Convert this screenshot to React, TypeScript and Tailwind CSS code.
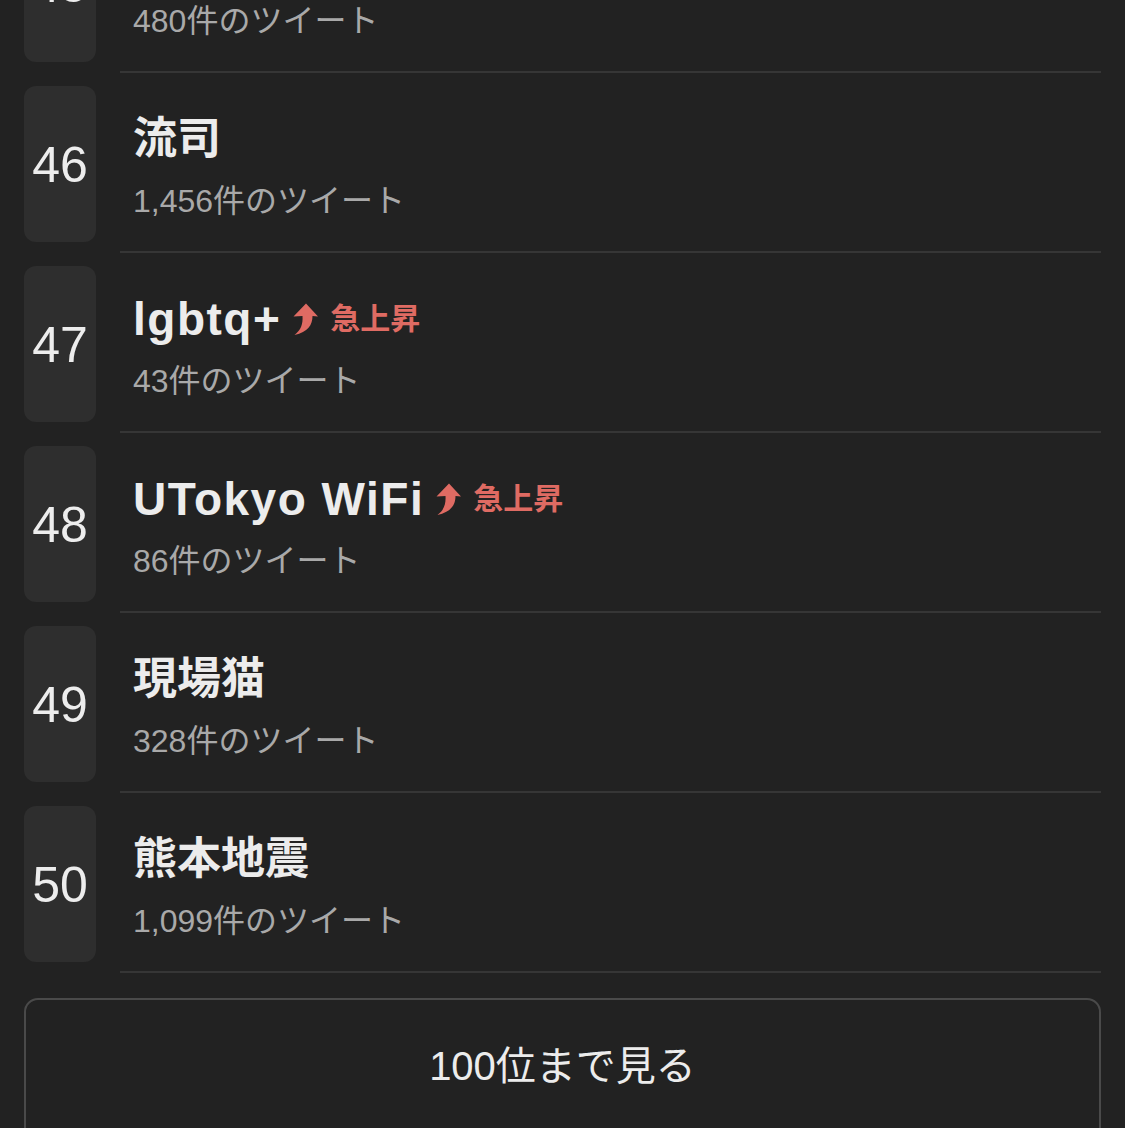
import { FC } from "react";

type Item = {
  rank: number;
  title: string;
  count: string;
  rising?: boolean;
};

const items: Item[] = [
  { rank: 45, title: "", count: "480" },
  { rank: 46, title: "流司", count: "1,456" },
  { rank: 47, title: "lgbtq+", count: "43", rising: true },
  { rank: 48, title: "UTokyo WiFi", count: "86", rising: true },
  { rank: 49, title: "現場猫", count: "328" },
  { rank: 50, title: "熊本地震", count: "1,099" },
];

const font = {
  fontFamily:
    '"Liberation Sans", "Noto Sans CJK JP", Arial, sans-serif',
};

const RisingArrow: FC = () => (
  <svg width="25" height="32" viewBox="0 0 25 32" className="shrink-0">
    <path
      d="M13 0.5 L25 13.5 L19.5 13 C19.5 22 15 29 1.5 32 C8 27 10 21 9.5 13 L0.5 13.5 Z"
      fill="#df6b63"
    />
  </svg>
);

const RankRow: FC<{ item: Item }> = ({ item }) => {
  const latin = /[A-Za-z]/.test(item.title);
  return (
    <div className="pt-[13px]">
      <div className="flex">
        <div className="w-[72px] h-[156px] shrink-0 rounded-[12px] bg-[#2e2e2e] flex items-center justify-center text-[50px] text-[#ededed] leading-none pt-[2px]">
          {item.rank}
        </div>
        <div className="ml-[37px] flex flex-col justify-center pt-[6px]">
          <div className="flex items-center h-[56px]">
            <span
              className={
                latin
                  ? "text-[46px] font-bold text-[#ececec] leading-none tracking-[1.5px]"
                  : "text-[44px] font-bold text-[#ececec] leading-none"
              }
            >
              {item.title}
            </span>
            {item.rising && (
              <span className="flex items-center ml-[12px] gap-[12px] text-[#df6b63] text-[30px] font-bold leading-none">
                <RisingArrow />
                急上昇
              </span>
            )}
          </div>
          <div className="mt-[12px] h-[44px] flex items-center text-[32px] text-[#a9a9a9] leading-none">
            {item.count}件のツイート
          </div>
        </div>
      </div>
      <div className="ml-[96px] mt-[9px] h-[2px] bg-[#363636]" />
    </div>
  );
};

const App: FC = () => {
  return (
    <div
      className="w-[1125px] h-[1128px] overflow-hidden bg-[#222222]"
      style={font}
    >
      <div className="mt-[-107px] pl-[24px] pr-[24px]">
        {items.map((item) => (
          <RankRow key={item.rank} item={item} />
        ))}
        <button
          className="mt-[25px] w-full h-[160px] rounded-[14px] border-2 border-[#4a4a4a] bg-[#222222] text-[40px] text-[#ececec] pb-[24px]"
          style={font}
        >
          100位まで見る
        </button>
      </div>
    </div>
  );
};

export default App;
